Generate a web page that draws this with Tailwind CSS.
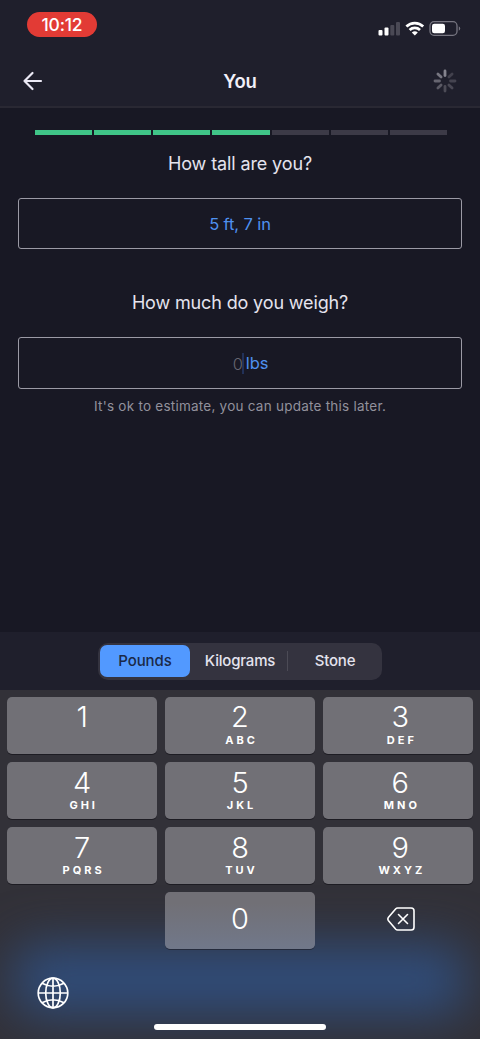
<!DOCTYPE html>
<html lang="en">
<head>
<meta charset="utf-8">
<title>You</title>
<script src="https://cdn.jsdelivr.net/npm/@tailwindcss/browser@4"></script>
</head>
<body class="bg-[#181824]">
<div class="flex h-[1039px] w-[480px] flex-col overflow-hidden bg-[#181824] font-['Inter',sans-serif] text-[#e4e3ee]">
  <header class="h-[108px] shrink-0 border-b-2 border-[#292833] bg-[#1f1f2c]">
    <div class="flex h-[54px] items-start justify-between pr-[19px] pl-[27px]">
      <div class="mt-3 flex h-[25px] w-[70px] items-center justify-center rounded-full bg-[#e23b35] pt-px text-[17.500px] font-medium tracking-[-0.2px] text-white">10:12</div>
      <svg class="mt-5" width="83" height="18" viewBox="0 0 83 18">
        <g fill="#fff"><rect x="0.5" y="10" width="4" height="5.500" rx="1"/><rect x="6.500" y="7.500" width="4" height="8" rx="1"/></g>
        <g fill="#4a4955"><rect x="12.300" y="5" width="4" height="10.500" rx="1"/><rect x="18" y="2" width="4" height="13.500" rx="1"/></g>
        <g fill="none" stroke="#fff" stroke-width="2.700"><path d="M28.400 6.500a12 12 0 0 1 16.800 0"/><path d="M31.600 10a7.500 7.500 0 0 1 10.400 0"/></g>
        <path d="M36.800 15.600l-3-3a4.300 4.300 0 0 1 6 0z" fill="#fff"/>
        <rect x="52" y="1.700" width="27" height="13.600" rx="4" fill="none" stroke="#777681" stroke-width="1.300"/>
        <rect x="54" y="3.700" width="13" height="9.600" rx="2.200" fill="#fff"/>
        <path d="M80.800 6.300a2.500 2.500 0 0 1 0 4.500z" fill="#777681"/>
      </svg>
    </div>
    <div class="grid h-[54px] grid-cols-3 items-center">
      <svg class="ml-[22px]" width="22" height="20" viewBox="0 0 22 20" fill="none" stroke="#ebe9f5" stroke-width="2.200" stroke-linecap="round" stroke-linejoin="round"><path d="M19 10H2.500M10.500 2L2.500 10L10.500 18"/></svg>
      <h1 class="pt-[2px] text-center text-[18.500px] font-semibold tracking-[-0.1px] text-[#f1f0f9]">You</h1>
      <svg class="mr-[22px] justify-self-end" width="26" height="26" viewBox="-13 -13 26 26" stroke-width="2.800" stroke-linecap="round">
        <path d="M0-5.500V-10" stroke="#85848f"/><path d="M3.900-3.900L7.100-7.100" stroke="#42414d"/><path d="M5.500 0H10" stroke="#454450"/><path d="M3.900 3.900L7.100 7.100" stroke="#494854"/><path d="M0 5.500V10" stroke="#4c4b56"/><path d="M-3.900 3.900L-7.100 7.100" stroke="#5b5a65"/><path d="M-5.500 0H-10" stroke="#666570"/><path d="M-3.900-3.900L-7.100-7.100" stroke="#777681"/>
      </svg>
    </div>
  </header>

  <main class="flex grow flex-col px-[18px] pt-[22px]">
    <div class="mx-[17px] grid h-[5px] w-[412px] grid-cols-7 gap-[2px]">
      <i class="bg-[#40c588]"></i><i class="bg-[#40c588]"></i><i class="bg-[#40c588]"></i><i class="bg-[#40c588]"></i><i class="bg-[#3c3a47]"></i><i class="bg-[#3c3a47]"></i><i class="bg-[#3c3a47]"></i>
    </div>
    <h2 class="mt-[15px] text-center text-[18px] leading-7 tracking-[-0.120px]">How tall are you?</h2>
    <div class="mt-5 flex h-[51px] items-center justify-center rounded-[3px] border border-[#9b9aa5] pt-px text-[16.500px] tracking-[-0.1px] text-[#4f91f0]">5 ft, 7 in</div>
    <h2 class="mt-10 text-center text-[18px] leading-7 tracking-[-0.140px]">How much do you weigh?</h2>
    <div class="mt-5 flex h-[52px] items-center justify-center rounded-[3px] border border-[#9b9aa5] pl-[21px] text-[16.500px] text-[#4f91f0]">
      <span class="pt-[2px] font-light text-[#666570]">0</span><span class="-ml-px mr-[2px] h-[21px] w-[2px] bg-[#223158]"></span><span class="tracking-[-0.1px]">lbs</span>
    </div>
    <p class="mt-[7px] text-center text-[13.500px] leading-5 tracking-[0.240px] text-[#92919c]">It's ok to estimate, you can update this later.</p>
  </main>

  <section class="flex h-[58px] shrink-0 items-center justify-center bg-[#1f1f2c]">
    <div class="flex h-[37px] w-[284px] items-center rounded-[10px] bg-[#34333f] p-[2px] text-[15px] font-medium tracking-[-0.2px]">
      <div class="flex h-8 w-[90px] items-center justify-center rounded-[7px] bg-[#5299ff] pt-px tracking-[-0.050px] text-[#1b2947]">Pounds</div>
      <div class="flex h-5 w-[98px] items-center justify-center border-r border-[#4c4b56] pt-px pl-[3px]">Kilograms</div>
      <div class="grow pt-px pl-[2px] text-center">Stone</div>
    </div>
  </section>

  <section class="relative isolate h-[349px] shrink-0 overflow-hidden bg-[#323138] px-[7px] pt-[7px] text-white">
    <div class="absolute top-[255px] left-[14px] -z-10 h-[70px] w-[452px] rounded-[20px] bg-[#304d7b] blur-[25px]"></div>
    <div class="grid grid-cols-3 gap-x-[7.500px] gap-y-2">
      <div class="flex h-[57px] flex-col items-center rounded-[5px] bg-[#717076] pt-1 shadow-[0_1px_0_#1d1c23]"><span class="text-[29px] leading-8 font-light">1</span></div>
      <div class="flex h-[57px] flex-col items-center rounded-[5px] bg-[#717076] pt-1 shadow-[0_1px_0_#1d1c23]"><span class="text-[29px] leading-8 font-light">2</span><span class="pl-[3px] text-[11px] leading-[14px] font-bold tracking-[3px]">ABC</span></div>
      <div class="flex h-[57px] flex-col items-center rounded-[5px] bg-[#717076] pt-1 pl-[5px] shadow-[0_1px_0_#1d1c23]"><span class="text-[29px] leading-8 font-light">3</span><span class="pl-[3px] text-[11px] leading-[14px] font-bold tracking-[3px]">DEF</span></div>
      <div class="flex h-[57px] flex-col items-center rounded-[5px] bg-[#717076] pt-[5px] shadow-[0_1px_0_#1d1c23]"><span class="text-[29px] leading-8 font-light">4</span><span class="-mt-px pl-[3px] text-[11px] leading-[14px] font-bold tracking-[3px]">GHI</span></div>
      <div class="flex h-[57px] flex-col items-center rounded-[5px] bg-[#717076] pt-[5px] shadow-[0_1px_0_#1d1c23]"><span class="text-[29px] leading-8 font-light">5</span><span class="-mt-px pl-[3px] text-[11px] leading-[14px] font-bold tracking-[3px]">JKL</span></div>
      <div class="flex h-[57px] flex-col items-center rounded-[5px] bg-[#717076] pt-[5px] pl-[5px] shadow-[0_1px_0_#1d1c23]"><span class="text-[29px] leading-8 font-light">6</span><span class="-mt-px pl-[3px] text-[11px] leading-[14px] font-bold tracking-[3px]">MNO</span></div>
      <div class="flex h-[57px] flex-col items-center rounded-[5px] bg-[#717076] pt-[5px] shadow-[0_1px_0_#1d1c23]"><span class="text-[29px] leading-8 font-light">7</span><span class="-mt-px pl-[3px] text-[11px] leading-[14px] font-bold tracking-[3px]">PQRS</span></div>
      <div class="flex h-[57px] flex-col items-center rounded-[5px] bg-[#717076] pt-[5px] shadow-[0_1px_0_#1d1c23]"><span class="text-[29px] leading-8 font-light">8</span><span class="-mt-px pl-[3px] text-[11px] leading-[14px] font-bold tracking-[3px]">TUV</span></div>
      <div class="flex h-[57px] flex-col items-center rounded-[5px] bg-[#717076] pt-[5px] pl-[5px] shadow-[0_1px_0_#1d1c23]"><span class="text-[29px] leading-8 font-light">9</span><span class="-mt-px pl-[3px] text-[11px] leading-[14px] font-bold tracking-[3px]">WXYZ</span></div>
      <div></div>
      <div class="flex h-[57px] items-center justify-center rounded-[5px] bg-linear-to-b from-[#717076] from-20% to-[#71788a] pb-1 shadow-[0_1px_0_#252b3c]"><span class="text-[29px] leading-8 font-light">0</span></div>
      <div class="flex h-[57px] items-center justify-center pb-[3px] pl-[7px]">
        <svg width="30" height="26" viewBox="0 0 30 26" fill="none" stroke="#fff" stroke-width="1.600" stroke-linecap="round" stroke-linejoin="round"><path d="M11.500 2H25.200Q28 2 28 4.800V21.200Q28 24 25.200 24H11.500Q10.500 24 9.800 23.300L2.300 14.500Q1.300 13 2.300 11.500L9.800 2.700Q10.500 2 11.500 2Z"/><path d="M12.500 8.500L21.500 17.500M21.500 8.500L12.500 17.500"/></svg>
      </div>
    </div>
    <svg class="mt-[27px] ml-[29px]" width="34" height="34" viewBox="-17 -17 34 34" fill="none" stroke="#fff" stroke-width="1.700"><circle r="14.800"/><ellipse rx="7.300" ry="14.800"/><path d="M0-14.800V14.800M-14.800 0H14.800M-11-9.700Q0-3.800 11-9.700M-11 9.700Q0 3.800 11 9.700"/></svg>
    <div class="mx-auto mt-[14px] h-[6px] w-[172px] rounded-full bg-white"></div>
  </section>
</div>
</body>
</html>
